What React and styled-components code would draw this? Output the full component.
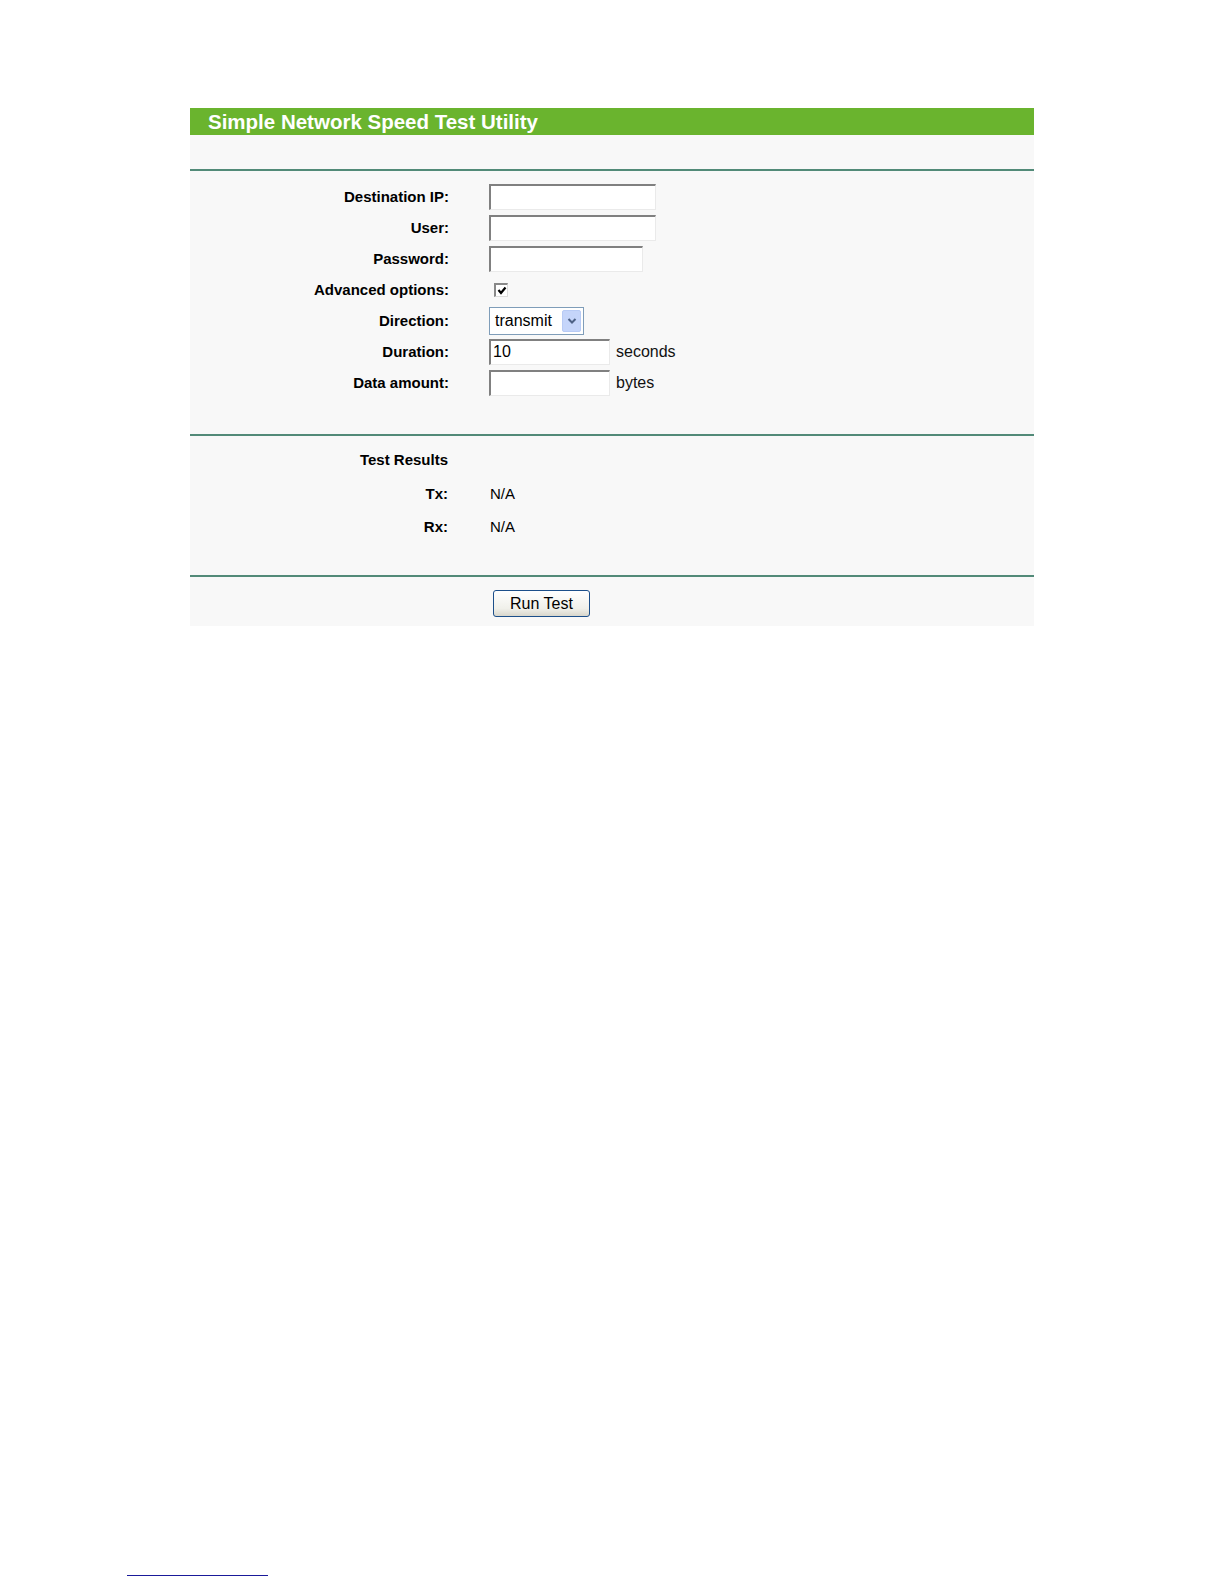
import React from 'react'
import styled, { createGlobalStyle } from 'styled-components'

const GlobalStyle = createGlobalStyle`
  body {
    margin: 0;
    background: #ffffff;
    font-family: "Liberation Sans", Arial, sans-serif;
    color: #000;
  }
`

const Page = styled.div`
  display: flex;
  flex-direction: column;
  padding-top: 108px;
  height: 1584px;
  box-sizing: border-box;
`

const Panel = styled.div`
  margin-left: 190px;
  width: 844px;
  background-color: #f8f8f8;
`

const Header = styled.div`
  height: 27px;
  background-color: #6ab42e;
  color: #fff;
  font-weight: bold;
  font-size: 20.5px;
  display: flex;
  align-items: center;
  padding-left: 18px;
`

const Spacer = styled.div`
  height: 34px;
`

const Rule = styled.div`
  height: 2px;
  background-color: #528a78;
`

const Section = styled.div`
  padding: ${({pad})=>pad};
`

const Row = styled.div`
  display: grid;
  grid-template-columns: ${({labelWidth})=>labelWidth || '259px'} 1fr;
  column-gap: ${({gap})=>gap || '40px'};
  align-items: center;
  height: ${({h})=>h || '31px'};
`

const Label = styled.div`
  text-align: right;
  font-weight: bold;
  font-size: 15px;
`

const Field = styled.div`
  display: flex;
  align-items: center;
  gap: 6px;
  font-size: ${({fs})=>fs || '16px'};
`

const TextBox = styled.div`
  width: ${({w})=>w}px;
  height: 26px;
  box-sizing: border-box;
  background-color: #fff;
  border-top: 2px solid #808080;
  border-left: 2px solid #808080;
  border-bottom: 1px solid #eaeaea;
  border-right: 1px solid #eaeaea;
  font-size: 16px;
  display: flex;
  align-items: center;
  padding-left: 2px;
`

const Check = styled.div`
  margin-left: 5px;
  width: 14px;
  height: 14px;
  box-sizing: border-box;
  background-color: #fff;
  border-top: 2px solid #888;
  border-left: 2px solid #888;
  border-bottom: 1px solid #ddd;
  border-right: 1px solid #ddd;
  display: flex;
  align-items: center;
  justify-content: center;
`

const Select = styled.div`
  width: 95px;
  height: 28px;
  box-sizing: border-box;
  border: 1px solid #7f9db9;
  background-color: #fff;
  display: flex;
  align-items: center;
  justify-content: space-between;
  padding: 0 2px 0 5px;
  font-size: 16px;
`

const DropButton = styled.div`
  width: 19px;
  height: 22px;
  background-color: #c5d5fa;
  border: 1px solid #b8cbf5;
  box-sizing: border-box;
  border-radius: 2px;
  display: flex;
  align-items: center;
  justify-content: center;
`

const Unit = styled.span`
  font-size: 16px;
  color: #111;
`

const Value = styled.span`
  font-size: 15px;
`

const RunButton = styled.button`
  width: 97px;
  height: 27px;
  margin-left: 4px;
  border: 1px solid #1c4f8a;
  border-radius: 3px;
  background: linear-gradient(#ffffff, #f0f0ea 70%, #d8d6cc);
  font-family: "Liberation Sans", Arial, sans-serif;
  font-size: 16px;
  color: #000;
  padding: 0;
`

const FootRule = styled.div`
  margin-top: auto;
  margin-bottom: 8px;
  margin-left: 127px;
  width: 141px;
  height: 1px;
  background-color: #1a1a9a;
`

const Chevron = () => (
  <svg width="10" height="8" viewBox="0 0 10 8">
    <path d="M1.5 2 L5 5.5 L8.5 2" fill="none" stroke="#4d6185" strokeWidth="2" />
  </svg>
)

const Tick = () => (
  <svg width="10" height="9" viewBox="0 0 10 9">
    <path d="M1.5 4 L4 7 L8.5 1.5" fill="none" stroke="#000" strokeWidth="2.2" />
  </svg>
)

const App = () => {
  return (
    <>
      <GlobalStyle />
      <Page>
        <Panel>
          <Header>Simple Network Speed Test Utility</Header>
          <Spacer />
          <Rule />
          <Section pad="10px 0 36px">
            <Row>
              <Label>Destination IP:</Label>
              <Field><TextBox w={167} /></Field>
            </Row>
            <Row>
              <Label>User:</Label>
              <Field><TextBox w={167} /></Field>
            </Row>
            <Row>
              <Label>Password:</Label>
              <Field><TextBox w={154} /></Field>
            </Row>
            <Row>
              <Label>Advanced options:</Label>
              <Field><Check><Tick /></Check></Field>
            </Row>
            <Row>
              <Label>Direction:</Label>
              <Field>
                <Select>
                  transmit
                  <DropButton><Chevron /></DropButton>
                </Select>
              </Field>
            </Row>
            <Row>
              <Label>Duration:</Label>
              <Field>
                <TextBox w={121}>10</TextBox>
                <Unit>seconds</Unit>
              </Field>
            </Row>
            <Row>
              <Label>Data amount:</Label>
              <Field>
                <TextBox w={121} />
                <Unit>bytes</Unit>
              </Field>
            </Row>
          </Section>
          <Rule />
          <Section pad="6px 0 32px">
            <Row h="34px" labelWidth="258px" gap="42px">
              <Label>Test Results</Label>
              <Field />
            </Row>
            <Row h="34px" labelWidth="258px" gap="42px">
              <Label>Tx:</Label>
              <Field fs="15px"><Value>N/A</Value></Field>
            </Row>
            <Row h="33px" labelWidth="258px" gap="42px">
              <Label>Rx:</Label>
              <Field fs="15px"><Value>N/A</Value></Field>
            </Row>
          </Section>
          <Rule />
          <Section pad="13px 0 9px">
            <Row h="27px">
              <div />
              <Field><RunButton>Run Test</RunButton></Field>
            </Row>
          </Section>
        </Panel>
        <FootRule />
      </Page>
    </>
  )
}

export default App
